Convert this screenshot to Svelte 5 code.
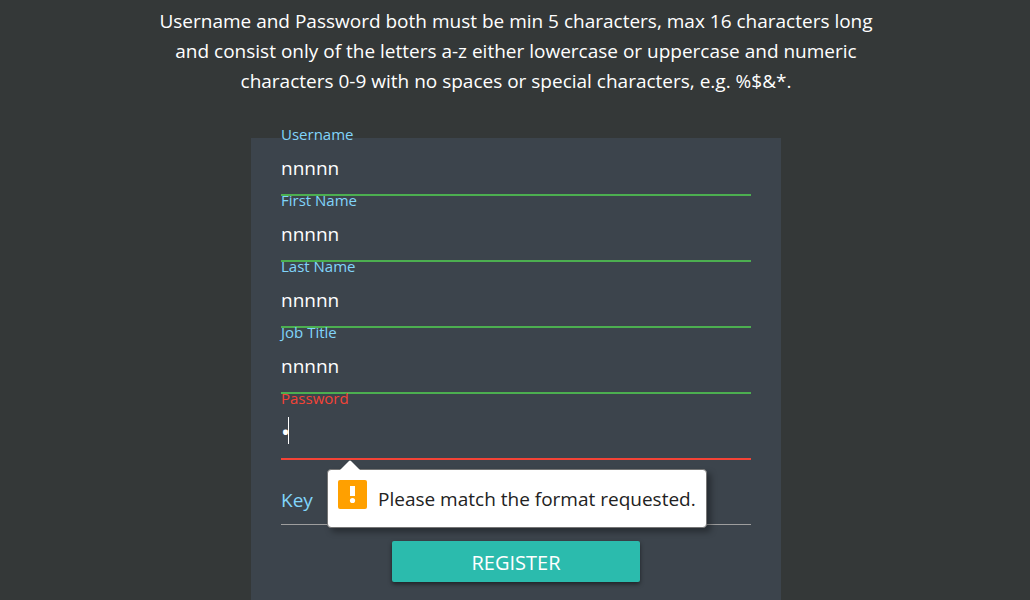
<script lang="ts">
  const pattern = '[a-zA-Z0-9]{5,16}';
  const fields = $state([
    { id: 'username', label: 'Username', value: 'nnnnn' },
    { id: 'first', label: 'First Name', value: 'nnnnn' },
    { id: 'last', label: 'Last Name', value: 'nnnnn' },
    { id: 'job', label: 'Job Title', value: 'nnnnn' }
  ]);
  let password = $state('n');
  let key = $state('');
</script>

<main>
  <p class="intro">
    Username and Password both must be min 5 characters, max 16 characters long
    and consist only of the letters a-z either lowercase or uppercase and numeric
    characters 0-9 with no spaces or special characters, e.g. %$&*.
  </p>
  <form onsubmit={(e) => e.preventDefault()}>
    {#each fields as field (field.id)}
      <div class="field">
        <label for={field.id}>{field.label}</label>
        <input id={field.id} type="text" {pattern} bind:value={field.value} />
      </div>
    {/each}
    <div class="field invalid">
      <label for="password">Password</label>
      <input id="password" type="password" {pattern} bind:value={password} />
      <span class="caret"></span>
      <div class="bubble" role="alert">
        <svg class="tip" width="22" height="11" viewBox="0 0 22 11" aria-hidden="true">
          <path d="M0 11 10 1Q11 0 12 1L22 11Z" fill="#fff" />
        </svg>
        <svg class="warn" width="29" height="29" viewBox="0 0 29 29" aria-hidden="true">
          <rect width="29" height="29" rx="2" fill="#ffa000" />
          <path d="M12 6h5v10h-5z" fill="#fff" />
          <circle cx="14.5" cy="20.5" r="2.6" fill="#fff" />
        </svg>
        <span>Please match the format requested.</span>
      </div>
    </div>
    <div class="field empty">
      <label for="key">Key</label>
      <input id="key" type="text" bind:value={key} />
    </div>
    <button type="submit">REGISTER</button>
  </form>
</main>

<style>
  :global(body) {
    margin: 0;
    background: #343838;
  }
  main {
    box-sizing: border-box;
    min-height: 100vh;
    padding-left: 2px;
    display: flex;
    flex-direction: column;
    align-items: center;
    font-family: 'Open Sans', 'Noto Sans', sans-serif;
    color: #fff;
  }
  .intro {
    margin: 0;
    padding: 6px 0 42px;
    max-width: 740px;
    font-size: 19px;
    line-height: 30px;
    text-align: center;
  }
  form {
    box-sizing: border-box;
    width: 100%;
    max-width: 530px;
    flex: 1;
    padding: 1px 30px 18px;
    background: #3c444c;
    display: flex;
    flex-direction: column;
  }
  .field {
    position: relative;
    height: 66px;
  }
  label {
    position: absolute;
    top: -15px;
    left: 0;
    font-size: 15px;
    line-height: 20px;
    color: #81d4fa;
  }
  input {
    display: block;
    box-sizing: border-box;
    width: 100%;
    height: 57px;
    padding: 2px 0 0;
    border: 0;
    border-bottom: 2px solid #4caf50;
    border-radius: 0;
    outline: 0;
    background: transparent;
    color: #fff;
    font: 19px 'Open Sans', 'Noto Sans', sans-serif;
  }
  .invalid label {
    color: #f44336;
  }
  .invalid input {
    border-color: #f44336;
    font-size: 24px;
  }
  .empty label {
    top: 16px;
    font-size: 19px;
    line-height: 30px;
  }
  .empty input {
    height: 56px;
    border-bottom: 1px solid #9e9e9e;
  }
  .caret {
    position: absolute;
    left: 7px;
    top: 14px;
    width: 1px;
    height: 27px;
    background: #fff;
  }
  .bubble {
    position: absolute;
    z-index: 2;
    left: 46px;
    top: 66px;
    box-sizing: border-box;
    width: max-content;
    height: 59px;
    padding: 10px;
    display: flex;
    gap: 11px;
    border: 1px solid #767676;
    border-radius: 4px;
    background: #fff;
    box-shadow: 4px 4px 6px rgba(0, 0, 0, 0.35);
    color: #222;
    font-size: 19px;
    line-height: 38px;
  }
  .tip {
    position: absolute;
    left: 11px;
    top: -10px;
  }
  button {
    align-self: center;
    width: 248px;
    height: 41px;
    margin-top: 6px;
    border: 0;
    border-radius: 2px;
    background: #2bbbad;
    color: #fff;
    font: 20px 'Open Sans', 'Noto Sans', sans-serif;
    padding: 2px 0 0;
    box-shadow: 0 2px 4px rgba(0, 0, 0, 0.5);
  }
</style>
